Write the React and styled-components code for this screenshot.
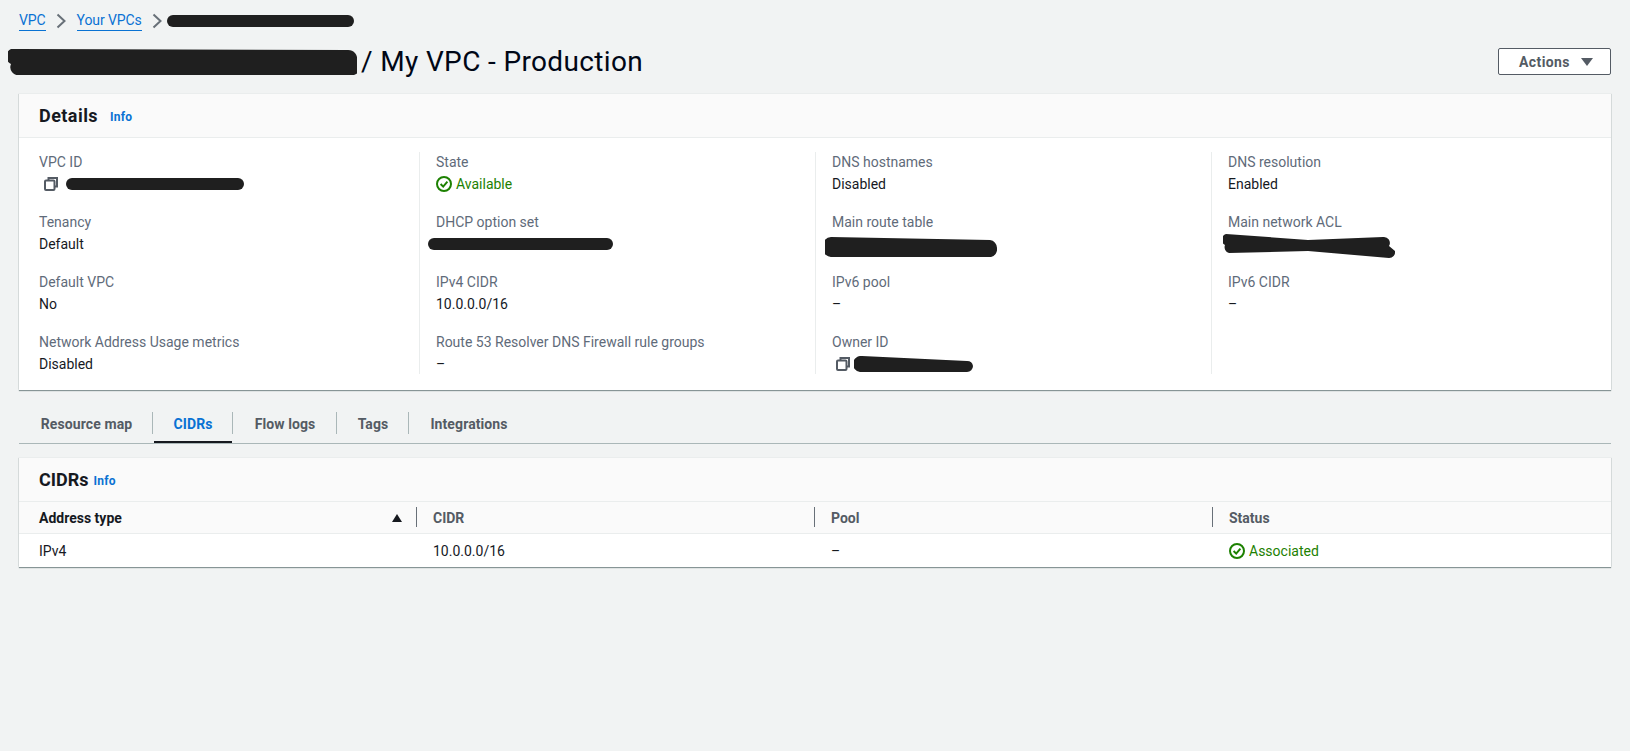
import React from "react";
import styled, { createGlobalStyle } from "styled-components";

const GlobalStyle = createGlobalStyle`
  html, body {
    margin: 0;
    padding: 0;
    background: #f1f3f3;
    color: #000716;
    font-family: Roboto, "Liberation Sans", sans-serif;
    font-size: 14px;
    line-height: 20px;
  }
`;

const Page = styled.div`
  width: 1630px;
  height: 751px;
  padding-right: 19px;
  box-sizing: border-box;
  overflow: hidden;
`;

const Breadcrumbs = styled.nav`
  display: flex;
  align-items: center;
  height: 20px;
  padding: 11px 0 0 19px;
`;

const CrumbLink = styled.a`
  color: #0972d3;
  font-size: 14px;
  line-height: 19px;
  letter-spacing: -0.1px;
  border-bottom: 1px solid #0972d3;
`;

const CrumbArrow = styled.svg`
  width: 12px;
  height: 16px;
  margin: 0 ${(p) => (p.$tight ? "4px" : "10px")} 0 9px;
  fill: none;
  stroke: #687078;
  stroke-width: 2;
`;

const TitleRow = styled.div`
  display: flex;
  align-items: center;
  justify-content: space-between;
  height: 27px;
  padding: 17px 0 0 8px;
  margin-bottom: 18px;
`;

const Title = styled.h1`
  display: flex;
  align-items: center;
  margin: 0;
  font-size: 28px;
  line-height: 34px;
  font-weight: 400;
  letter-spacing: 0.36px;
  color: #000716;
  svg {
    margin-right: 4px;
  }
`;

const ActionsButton = styled.button`
  display: flex;
  align-items: center;
  justify-content: center;
  gap: 11px;
  width: 113px;
  height: 27px;
  padding: 0 0 0 3px;
  background: #fff;
  border: 1px solid #545b64;
  border-radius: 2px;
  color: #545b64;
  font: 700 14px/20px Roboto, sans-serif;
  letter-spacing: 0.4px;
`;

const Caret = styled.span`
  width: 0;
  height: 0;
  border-left: 6px solid transparent;
  border-right: 6px solid transparent;
  border-top: 8px solid #545b64;
`;

const Card = styled.section`
  margin-left: 19px;
  background: #fff;
  border-top: 1px solid #eaeded;
  box-shadow: 0 1px 1px 0 #879596, 1px 0 1px -1px #aab7b8, -1px 0 1px -1px #aab7b8;
`;

const CardHeader = styled.header`
  display: flex;
  align-items: center;
  gap: ${(p) => p.$gap};
  height: 43px;
  padding: 0 20px;
  background: #fafafa;
  border-bottom: 1px solid #eaeded;
`;

const CardTitle = styled.h2`
  margin: 0;
  font-size: 18px;
  line-height: 22px;
  font-weight: 700;
  letter-spacing: ${(p) => p.$tracking || "0"};
  color: #16191f;
`;

const InfoLink = styled.a`
  color: #0972d3;
  font-size: 12px;
  font-weight: 700;
  letter-spacing: 0.2px;
  line-height: 16px;
  padding-top: 2px;
`;

const DetailsGrid = styled.div`
  display: grid;
  grid-template-columns: repeat(4, 396px);
  padding: 14px 0 16px 4px;
`;

const DetailColumn = styled.div`
  display: flex;
  flex-direction: column;
  gap: 18px;
  padding-left: ${(p) => (p.$first ? "15px" : "16px")};
  border-left: 1px solid ${(p) => (p.$first ? "transparent" : "#eaeded")};
`;

const Field = styled.div`
  height: 42px;
`;

const Label = styled.div`
  color: #5f6b7a;
  font-size: 14px;
  line-height: 20px;
`;

const Value = styled.div`
  display: flex;
  align-items: center;
  height: 20px;
  margin-top: 2px;
  color: #16191f;
  font-size: 14px;
  line-height: 20px;
`;

const StatusText = styled.span`
  display: inline-flex;
  align-items: center;
  gap: 4px;
  color: #1d8102;
`;

const CopyIcon = styled.svg`
  flex: none;
  width: 14px;
  height: 14px;
  margin-left: ${(p) => p.$left};
  margin-right: ${(p) => p.$right};
  fill: none;
  stroke: #545b64;
  stroke-width: 2;
`;

const Tabs = styled.div`
  display: flex;
  margin: 22px 0 13px 19px;
  border-bottom: 1px solid #aab7b8;
`;

const TabCell = styled.div`
  display: flex;
  align-items: center;
  justify-content: center;
  box-sizing: border-box;
  width: ${(p) => p.$width}px;
  height: 31px;
  padding: 0 0 8px 2px;
  position: relative;
  color: ${(p) => (p.$active ? "#0972d3" : "#545b64")};
  font-size: 14px;
  font-weight: 700;
  letter-spacing: 0.1px;

  &::before {
    content: "";
    display: ${(p) => (p.$last ? "none" : "block")};
    position: absolute;
    right: -1px;
    top: 0;
    height: 22px;
    width: 1px;
    background: #aab7b8;
  }

  &::after {
    content: "";
    display: ${(p) => (p.$active ? "block" : "none")};
    position: absolute;
    left: 2px;
    right: 0;
    bottom: 0;
    height: 2px;
    background: #16191f;
  }
`;

const Table = styled.div`
  display: grid;
  grid-template-columns: 397px 398px 398px 1fr;
`;

const Th = styled.div`
  display: flex;
  align-items: center;
  justify-content: space-between;
  height: 32px;
  padding: 0 19px 0 ${(p) => (p.$first ? "20px" : "17px")};
  box-sizing: border-box;
  background: #fafafa;
  border-bottom: 1px solid #eaeded;
  position: relative;
  color: ${(p) => (p.$sorted ? "#16191f" : "#545b64")};
  font-weight: 700;
  font-size: 14px;

  &::before {
    content: "";
    display: ${(p) => (p.$first ? "none" : "block")};
    position: absolute;
    left: 0;
    top: 5px;
    height: 20px;
    width: 1px;
    background: #687078;
  }
`;

const SortUp = styled.span`
  width: 0;
  height: 0;
  margin-right: -5px;
  border-left: 5px solid transparent;
  border-right: 5px solid transparent;
  border-bottom: 8px solid #16191f;
`;

const Td = styled.div`
  display: flex;
  align-items: center;
  height: 33px;
  padding-left: ${(p) => (p.$first ? "20px" : "17px")};
  color: #16191f;
  font-size: 14px;
`;

const ScribbleMark = styled.svg`
  flex: none;
  margin-left: ${(p) => p.$left || "0"};
  margin-top: ${(p) => p.$top || "0"};
  fill: #1f1f1f;
`;

// blacked out ids in the screenshot
const Scribble = ({ width, height, d, left, top }) => (
  <ScribbleMark width={width} height={height} viewBox={`0 0 ${width} ${height}`} $left={left} $top={top}>
    <path d={d} />
  </ScribbleMark>
);

const pill = (w, h) => {
  const r = h / 2;
  return `M${r} 0 L${w - r} 0 A${r} ${r} 0 0 1 ${w - r} ${h} L${r} ${h} A${r} ${r} 0 0 1 ${r} 0Z`;
};

const Arrow = ({ tight }) => (
  <CrumbArrow $tight={tight} viewBox="0 0 12 16">
    <path d="M2.5 1.5 L9.5 8 L2.5 14.5" />
  </CrumbArrow>
);

const Copy = ({ left, right }) => (
  <CopyIcon $left={left} $right={right} viewBox="0 0 14 14">
    <path d="M4.5 3.5 V1 H13 V9.5 H10.5" />
    <rect x="1" y="3.5" width="9.5" height="9.5" rx="1" />
  </CopyIcon>
);

const CheckCircle = () => (
  <svg width="16" height="16" viewBox="0 0 16 16" fill="none" stroke="#1d8102" strokeWidth="2">
    <circle cx="8" cy="8" r="7" />
    <path d="M4.6 8 L7.2 10.6 L11.4 5.6" />
  </svg>
);

const Status = ({ children }) => (
  <StatusText>
    <CheckCircle />
    {children}
  </StatusText>
);

const columns = [
  [
    {
      label: "VPC ID",
      value: (
        <>
          <Copy left="5px" right="8px" />
          <Scribble width={178} height={12} d={pill(178, 12)} />
        </>
      ),
    },
    { label: "Tenancy", value: "Default" },
    { label: "Default VPC", value: "No" },
    { label: "Network Address Usage metrics", value: "Disabled" },
  ],
  [
    { label: "State", value: <Status>Available</Status> },
    {
      label: "DHCP option set",
      value: <Scribble width={185} height={12} left="-8px" d={pill(185, 12)} />,
    },
    { label: "IPv4 CIDR", value: "10.0.0.0/16" },
    { label: "Route 53 Resolver DNS Firewall rule groups", value: "–" },
  ],
  [
    { label: "DNS hostnames", value: "Disabled" },
    {
      label: "Main route table",
      value: (
        <Scribble
          width={172}
          height={20}
          left="-7px"
          top="6px"
          d="M6 0 L165 3 A8 8 0 0 1 172 11 A8 8 0 0 1 166 20 L8 20 A10 10 0 0 1 6 0Z"
        />
      ),
    },
    { label: "IPv6 pool", value: "–" },
    {
      label: "Owner ID",
      value: (
        <>
          <Copy left="4px" right="4px" />
          <Scribble
            width={119}
            height={16}
            d="M8 0 L113 5 A6 6 0 0 1 119 10 A6 6 0 0 1 113 16 L6 16 A8 8 0 0 1 8 0Z"
          />
        </>
      ),
    },
  ],
  [
    { label: "DNS resolution", value: "Enabled" },
    {
      label: "Main network ACL",
      value: (
        <Scribble
          width={172}
          height={24}
          left="-5px"
          top="4px"
          d="M3 0 L85 6 L160 3 A6 6 0 0 1 166 12 L172 17 A6 6 0 0 1 166 24 L85 17 L6 19 A6 6 0 0 1 2 11 A6 6 0 0 1 3 0Z"
        />
      ),
    },
    { label: "IPv6 CIDR", value: "–" },
  ],
];

const tabs = [
  { name: "Resource map", width: 133 },
  { name: "CIDRs", width: 80, active: true },
  { name: "Flow logs", width: 104 },
  { name: "Tags", width: 72 },
  { name: "Integrations", width: 120, last: true },
];

export default function App() {
  return (
    <Page>
      <GlobalStyle />
      <Breadcrumbs>
        <CrumbLink>VPC</CrumbLink>
        <Arrow />
        <CrumbLink>Your VPCs</CrumbLink>
        <Arrow tight />
        <Scribble width={187} height={12} d={pill(187, 12)} />
      </Breadcrumbs>
      <TitleRow>
        <Title>
          <Scribble
            width={349}
            height={26}
            d="M10 0 L340 1 A9 9 0 0 1 349 12 A8 8 0 0 1 346 26 L12 26 A8 8 0 0 1 3 15 A8 8 0 0 1 10 0Z"
          />
          / My VPC - Production
        </Title>
        <ActionsButton>
          Actions
          <Caret />
        </ActionsButton>
      </TitleRow>

      <Card>
        <CardHeader $gap="12px">
          <CardTitle $tracking="0.45px">Details</CardTitle>
          <InfoLink>Info</InfoLink>
        </CardHeader>
        <DetailsGrid>
          {columns.map((col, i) => (
            <DetailColumn key={i} $first={i === 0}>
              {col.map((f) => (
                <Field key={f.label}>
                  <Label>{f.label}</Label>
                  <Value>{f.value}</Value>
                </Field>
              ))}
            </DetailColumn>
          ))}
        </DetailsGrid>
      </Card>

      <Tabs>
        {tabs.map((t) => (
          <TabCell key={t.name} $width={t.width} $active={t.active} $last={t.last}>
            {t.name}
          </TabCell>
        ))}
      </Tabs>

      <Card>
        <CardHeader $gap="5px">
          <CardTitle>CIDRs</CardTitle>
          <InfoLink>Info</InfoLink>
        </CardHeader>
        <Table>
          <Th $first $sorted>
            Address type
            <SortUp />
          </Th>
          <Th>CIDR</Th>
          <Th>Pool</Th>
          <Th>Status</Th>
          <Td $first>IPv4</Td>
          <Td>10.0.0.0/16</Td>
          <Td>–</Td>
          <Td>
            <Status>Associated</Status>
          </Td>
        </Table>
      </Card>
    </Page>
  );
}
